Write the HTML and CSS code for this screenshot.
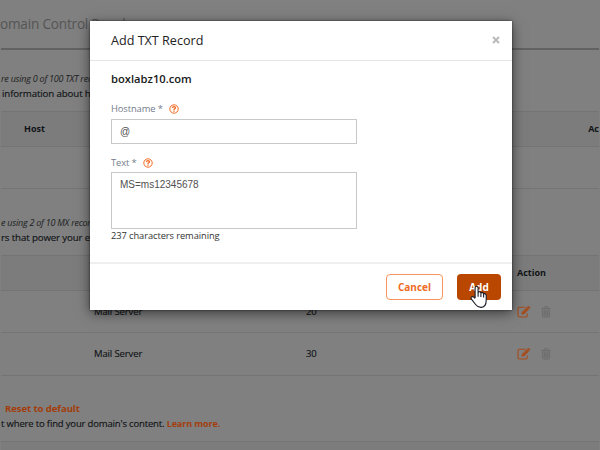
FILE: index.html
```
<!DOCTYPE html>
<html lang="en">
<head>
<meta charset="utf-8">
<title>Domain Control Panel</title>
<link rel="stylesheet" href="styles.css">
</head>
<body>
<svg class="defs" width="0" height="0" aria-hidden="true">
  <symbol id="edit" viewBox="0 0 14 12">
    <path d="M8.2 1.2H2.5Q1 1.2 1 2.7V9.5Q1 11 2.5 11H8.8Q10.3 11 10.3 9.5V7.6" fill="none" stroke="currentColor" stroke-width="1.1"/>
    <path d="M4.7 8.3L5.2 5.9L9.8 1.3L11.8 3.3L7.2 7.9Z M10.3 .8L10.9 .2Q11.3 -.1 11.7 .2L12.8 1.3Q13.1 1.7 12.8 2.1L12.2 2.7Z" fill="currentColor" stroke="currentColor" stroke-width=".4"/>
    <path d="M6.4 6.3L10 2.7" stroke="#808080" stroke-width=".4"/>
  </symbol>
  <symbol id="trash" viewBox="0 0 10 12">
    <path d="M1.4 2.8H8.6V11H1.4Z" fill="currentColor" opacity=".45"/>
    <path d="M.3 2.4H9.7M3.2 2.2V.8H6.8V2.2M1.4 2.8V10Q1.4 11.2 2.5 11.2H7.5Q8.6 11.2 8.6 10V2.8M3.5 4.4V9.4M5 4.4V9.4M6.5 4.4V9.4" fill="none" stroke="currentColor" stroke-width="1"/>
  </symbol>
  <symbol id="help" viewBox="0 0 10 10">
    <circle cx="5" cy="5" r="4.2" fill="none" stroke="currentColor" stroke-width="1"/>
    <path d="M3.4 4Q3.5 2.7 5 2.7Q6.5 2.7 6.5 3.8Q6.5 4.5 5.5 4.9Q5 5.1 5 5.9M5 6.6V7.8" fill="none" stroke="currentColor" stroke-width="1.3"/>
  </symbol>
</svg>
<main class="page">
  <h1 class="page-title">omain Control Panel</h1>
  <section class="intro intro-txt">
    <p class="usage">re using 0 of 100 TXT records.</p>
    <p class="about about-txt">information about hostnames.</p>
  </section>
  <div class="row head txt"><span>Host</span><span>Ac</span></div>
  <div class="row empty"></div>
  <section class="intro intro-mx">
    <p class="usage">e using 2 of 10 MX records.</p>
    <p class="about">rs that power your email.</p>
  </section>
  <div class="row head mx"><span></span><span></span><span>Action</span></div>
  <div class="row mx first"><span>Mail Server</span><span>20</span><span class="actions"><svg class="edit"><use href="#edit"/></svg><svg class="trash"><use href="#trash"/></svg></span></div>
  <div class="row mx"><span>Mail Server</span><span>30</span><span class="actions"><svg class="edit"><use href="#edit"/></svg><svg class="trash"><use href="#trash"/></svg></span></div>
  <section class="nameservers">
    <a class="reset">Reset to default</a>
    <p>t where to find your domain's content. <a>Learn more.</a></p>
  </section>
  <div class="row head last"></div>
</main>
<div class="modal" role="dialog">
  <header class="modal-head"><h2>Add TXT Record</h2>
    <svg class="close" viewBox="0 0 8 8"><path d="M1 1L7 7M7 1L1 7" stroke="#b9b9b9" stroke-width="1.9"/></svg>
  </header>
  <div class="modal-body">
    <h3>boxlabz10.com</h3>
    <div class="label"><span class="host-label">Hostname *</span><svg class="help"><use href="#help"/></svg></div>
    <div class="field">@</div>
    <div class="label label-text"><span>Text *</span><svg class="help"><use href="#help"/></svg></div>
    <div class="field area">MS=ms12345678</div>
    <p class="remaining">237 characters remaining</p>
  </div>
  <footer class="modal-foot"><button class="cancel">Cancel</button><button class="add">Add</button></footer>
</div>
<svg class="cursor" viewBox="0 0 18 24"><path d="M5.1 13V3.1Q5.1 1.3 6.6 1.3Q8.1 1.3 8.1 3.1V8Q8.2 6.7 9.5 6.7Q10.9 6.7 10.9 8.3Q11 7.4 12.2 7.4Q13.6 7.5 13.6 9.1Q13.8 8.5 14.7 8.6Q16.2 8.8 16.2 10.6V15.2Q16.2 22.4 10.8 22.4Q7.8 22.4 5.6 19.5L1.4 14.2Q.5 12.6 1.6 11.9Q2.7 11.2 3.8 12.2L5.1 13.4M8.1 7.5V11.7M10.9 8V12M13.6 9V12.4" fill="#fff" stroke="#171b25" stroke-width="1.1" stroke-linejoin="round"/></svg>
</body>
</html>
```
FILE: styles.css
```
* { box-sizing: border-box; }
body {
  margin: 0;
  width: 600px;
  height: 450px;
  overflow: hidden;
  position: relative;
  background: #808080;
  color: #111417;
  font: 9.5px/14px "Open Sans", sans-serif;
}
h1, h2, h3, p { margin: 0; }
.defs { position: absolute; }
.page { height: 450px; padding: 0 1px; overflow: hidden; }
.page-title {
  height: 50px;
  padding-top: 14px;
  border-bottom: 2px solid #626262;
  font-size: 13.6px;
  letter-spacing: -.2px;
  line-height: 20px;
  font-weight: 400;
  color: #555;
  text-indent: -1px;
  white-space: nowrap;
}
.intro { white-space: nowrap; }
.intro-txt { height: 61px; padding-top: 22px; }
.intro-mx { height: 66px; padding-top: 27px; }
.usage { font-size: 9px; letter-spacing: -.24px; font-style: italic; color: #1c1f22; }
.about { margin-top: 1px; font-size: 9.7px; letter-spacing: -.12px; -webkit-text-stroke: .15px; }
.about-txt { padding-left: 1px; }
.row { height: 43px; border-bottom: 1px solid #747474; align-items: center; }
.head {
  height: 36px;
  border-top: 1px solid #747474;
  background: #7c7c7c;
  font-weight: 700;
  font-size: 9px;
}
.txt { display: flex; justify-content: space-between; padding-left: 23px; }
.empty { height: 42px; }
.first { height: 42px; }
.mx { display: grid; grid-template-columns: 212px 211px 1fr; padding-left: 93px; font-size: 9.5px; letter-spacing: -.12px; -webkit-text-stroke: .15px; }
.mx.head { font-weight: 700; font-size: 9px; letter-spacing: 0; -webkit-text-stroke: 0; }
.actions { display: flex; align-items: center; gap: 10px; }
.edit { width: 14px; height: 12px; color: #a84a18; }
.trash { width: 10px; height: 12px; color: #6e6e6e; }
.nameservers { height: 65px; padding-top: 25px; font-size: 9.5px; letter-spacing: -.16px; -webkit-text-stroke: .15px; }
.nameservers a { color: #a33d0b; font-size: 9px; letter-spacing: -.1px; font-weight: 700; -webkit-text-stroke: 0; }
.nameservers .reset { display: block; padding-left: 4px; font-size: 9.6px; line-height: 16px; }
.last { height: 12px; }
.modal {
  position: absolute;
  left: 90px;
  top: 21px;
  width: 421.5px;
  height: 288.5px;
  background: #fff;
  box-shadow: 0 3px 12px rgba(0, 0, 0, .55), 0 0 2px rgba(0, 0, 0, .6);
}
.modal-head {
  height: 40px;
  padding: 0 12px 0 21px;
  border-bottom: 1px solid #e5e5e5;
  display: flex;
  align-items: center;
  justify-content: space-between;
}
.modal-head h2 { font-size: 12.6px; font-weight: 400; color: #222; }
.close { width: 8px; height: 8px; margin-bottom: 2px; }
.modal-body { height: 201px; padding: 10px 21px 0; }
.modal-body h3 { font-size: 11.2px; line-height: 16px; font-weight: 600; color: #191919; }
.label { display: flex; align-items: center; gap: 6px; height: 14px; margin-top: 15px; color: #747c8b; font-size: 9.4px; letter-spacing: -.1px; }
.label-text { margin-top: 12px; }
.help { width: 10px; height: 10px; color: #f26a25; }
.field {
  width: 246px;
  height: 25px;
  margin-top: 3px;
  padding: 5px 8px;
  border: 1px solid #c9c9c9;
  color: #505050;
  font: 10px/13px "Liberation Sans", sans-serif;
}
.label-text + .field { margin-top: 2px; }
.area { height: 57px; }
.remaining { color: #333; font-size: 9.3px; letter-spacing: -.07px; }
.modal-foot {
  height: 47.5px;
  border-top: 2px solid #efefef;
  padding: 10px 10.5px 0 0;
  display: flex;
  justify-content: flex-end;
  gap: 14px;
}
.modal-foot button {
  height: 26px;
  padding: 0;
  border-radius: 4px;
  font: 700 10px/14px "Open Sans", sans-serif;
}
.cancel { width: 57px; border: 1px solid #f7935d; background: #fff; color: #ee6b25; }
.add { width: 44px; border: 0; background: #b94700; color: #fff; }
.cursor { position: absolute; left: 470px; top: 285px; width: 18px; height: 24px; }
```
